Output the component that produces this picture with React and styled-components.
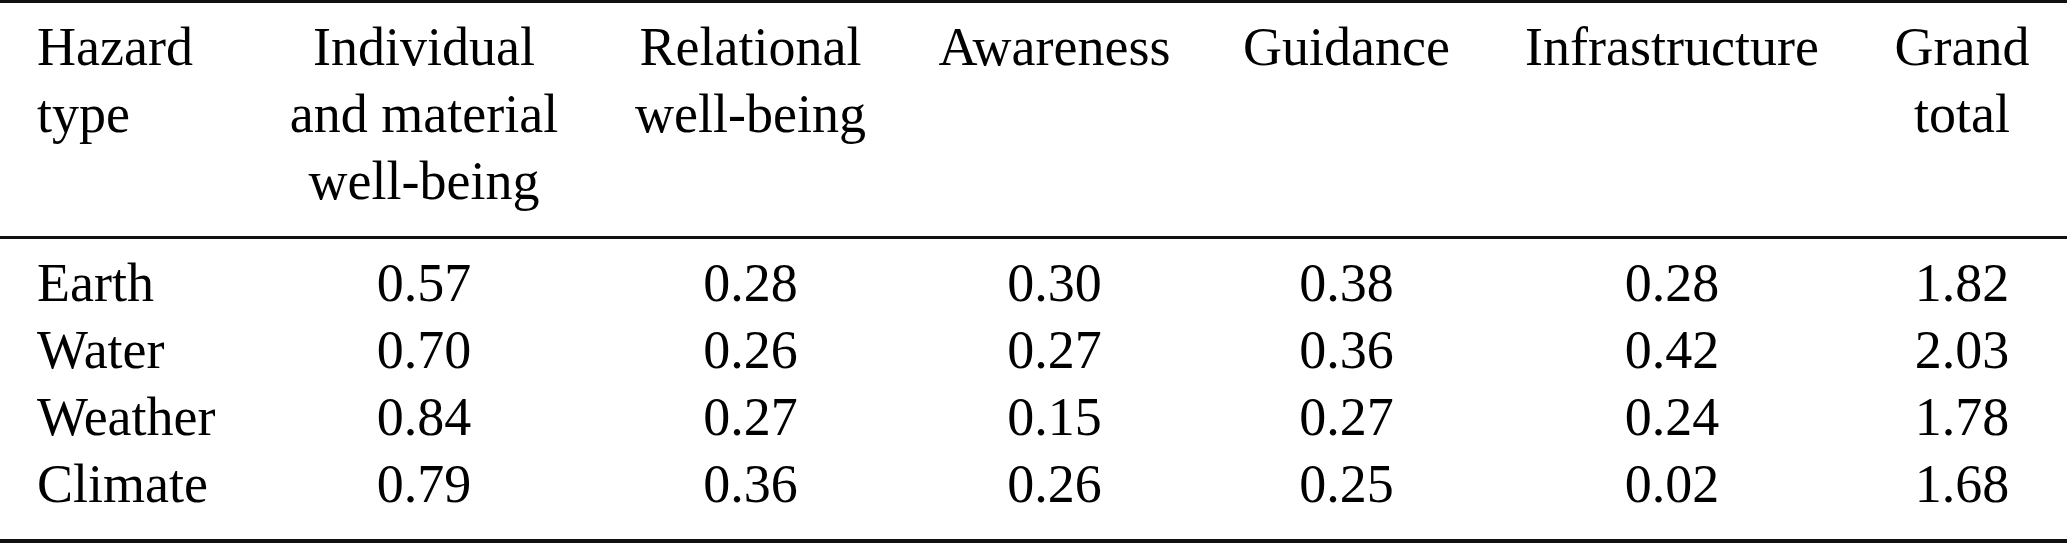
import React from "react";
import styled, { createGlobalStyle } from "styled-components";

const GlobalStyle = createGlobalStyle`
  html, body {
    margin: 0;
    padding: 0;
    background: #ffffff;
  }
  body {
    font-family: "Liberation Serif", "Times New Roman", serif;
    color: #000000;
  }
`;

const COLUMNS = "250px 348px 305px 303px 281px 370px 210px";

const Sheet = styled.div`
  width: 2067px;
  border-top: 3px solid #111;
  border-bottom: 4px solid #111;
  font-family: "Liberation Serif", "Times New Roman", serif;
  font-size: 54px;
  line-height: 66.7px;
  color: #000;
`;

const HeadRow = styled.div`
  display: grid;
  grid-template-columns: ${COLUMNS};
  align-items: start;
  padding: 11.4px 0 21.6px;
  border-bottom: 3px solid #111;
`;

const Body = styled.div`
  padding: 11.4px 0 21.8px;
`;

const Row = styled.div`
  display: grid;
  grid-template-columns: ${COLUMNS};
  height: 66.7px;
`;

const Cell = styled.div`
  white-space: nowrap;
  text-align: ${(p) => (p.$left ? "left" : "center")};
  padding-left: ${(p) => (p.$left ? "37px" : "0")};
`;

const headers = [
  ["Hazard", "type"],
  ["Individual", "and material", "well-being"],
  ["Relational", "well-being"],
  ["Awareness"],
  ["Guidance"],
  ["Infrastructure"],
  ["Grand", "total"],
];

const rows = [
  ["Earth", "0.57", "0.28", "0.30", "0.38", "0.28", "1.82"],
  ["Water", "0.70", "0.26", "0.27", "0.36", "0.42", "2.03"],
  ["Weather", "0.84", "0.27", "0.15", "0.27", "0.24", "1.78"],
  ["Climate", "0.79", "0.36", "0.26", "0.25", "0.02", "1.68"],
];

export default function App() {
  return (
    <>
      <GlobalStyle />
      <Sheet>
        <HeadRow>
          {headers.map((lines, i) => (
            <Cell key={i} $left={i === 0}>
              {lines.map((l, j) => (
                <React.Fragment key={j}>
                  {j > 0 && <br />}
                  {l}
                </React.Fragment>
              ))}
            </Cell>
          ))}
        </HeadRow>
        <Body>
          {rows.map((r) => (
            <Row key={r[0]}>
              {r.map((v, i) => (
                <Cell key={i} $left={i === 0}>
                  {v}
                </Cell>
              ))}
            </Row>
          ))}
        </Body>
      </Sheet>
    </>
  );
}
